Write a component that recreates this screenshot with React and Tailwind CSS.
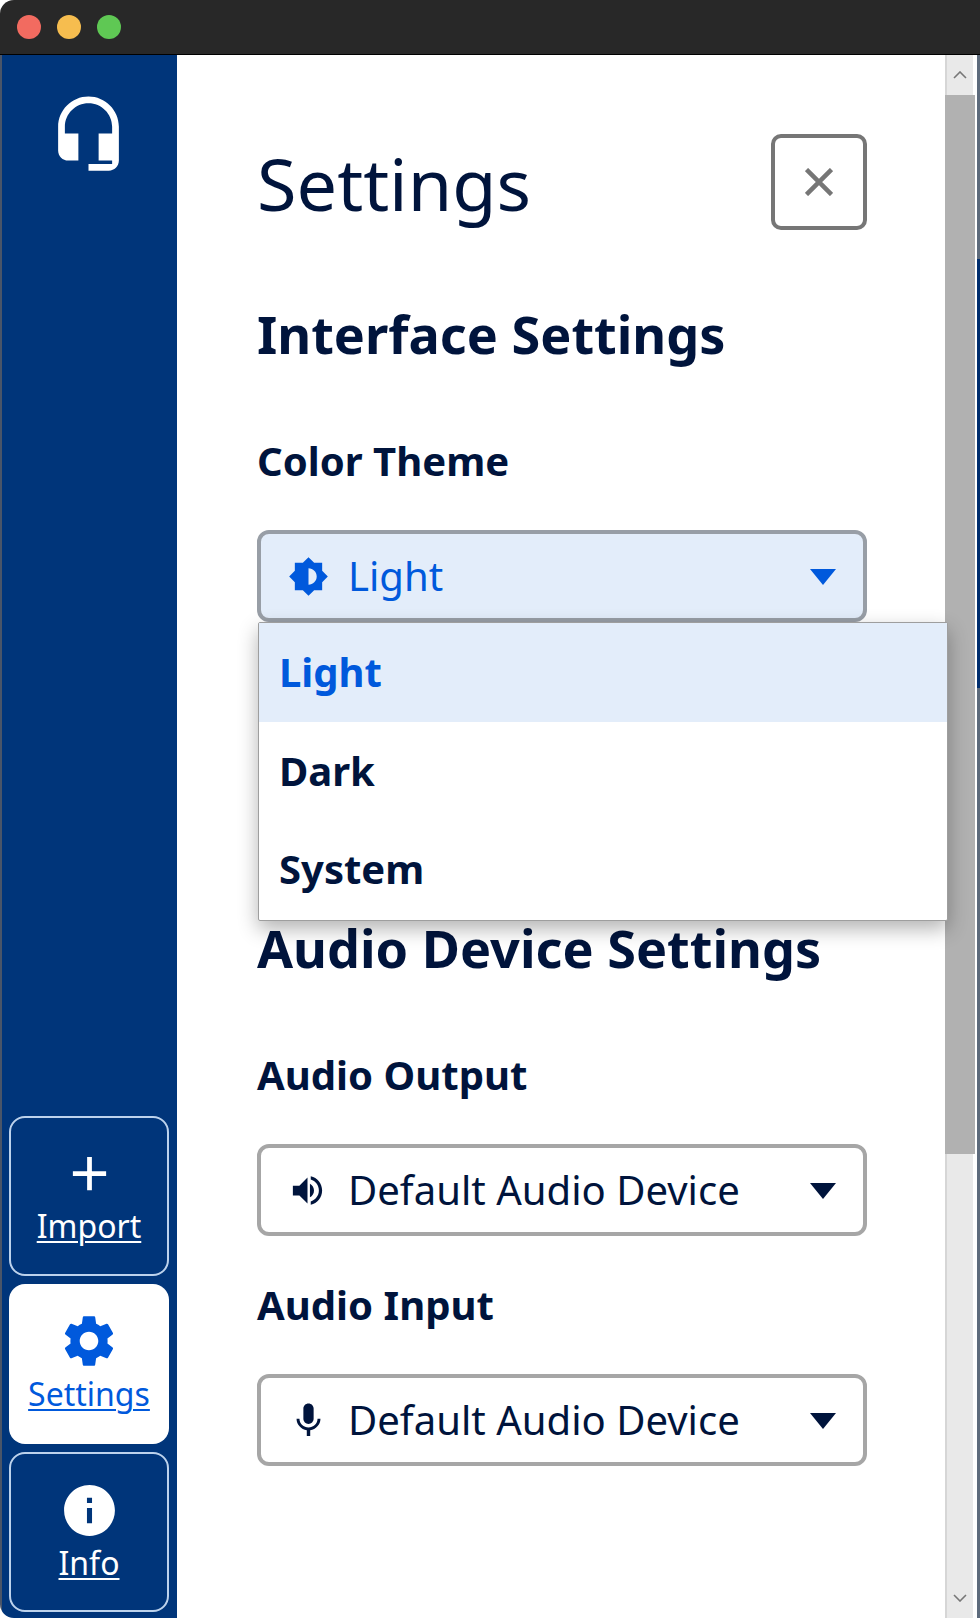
const PATHS = {
  headset: "M12 1c-4.97 0-9 4.03-9 9v7c0 1.66 1.34 3 3 3h3v-8H5v-2c0-3.87 3.13-7 7-7s7 3.13 7 7v2h-4v8h4v1h-7v2h6c1.66 0 3-1.34 3-3V10c0-4.97-4.03-9-9-9z",
  plus: "M19 13h-6v6h-2v-6H5v-2h6V5h2v6h6v2z",
  gear: "M19.14 12.94c.04-.3.06-.61.06-.94 0-.32-.02-.64-.07-.94l2.03-1.58c.18-.14.23-.41.12-.61l-1.92-3.32c-.12-.22-.37-.29-.59-.22l-2.39.96c-.5-.38-1.03-.7-1.62-.94l-.36-2.54c-.04-.24-.24-.41-.48-.41h-3.84c-.24 0-.43.17-.47.41l-.36 2.54c-.59.24-1.13.57-1.62.94l-2.39-.96c-.22-.08-.47 0-.59.22L2.74 8.87c-.12.21-.08.47.12.61l2.03 1.58c-.05.3-.09.63-.09.94s.02.64.07.94l-2.03 1.58c-.18.14-.23.41-.12.61l1.92 3.32c.12.22.37.29.59.22l2.39-.96c.5.38 1.03.7 1.62.94l.36 2.54c.05.24.24.41.48.41h3.84c.24 0 .44-.17.47-.41l.36-2.54c.59-.24 1.13-.56 1.62-.94l2.39.96c.22.08.47 0 .59-.22l1.92-3.32c.12-.22.07-.47-.12-.61l-2.01-1.58zM12 15.6c-1.98 0-3.6-1.62-3.6-3.6s1.62-3.6 3.6-3.6 3.6 1.62 3.6 3.6-1.62 3.6-3.6 3.6z",
  info: "M12 2C6.48 2 2 6.48 2 12s4.48 10 10 10 10-4.48 10-10S17.52 2 12 2zm1 15h-2v-6h2v6zm0-8h-2V7h2v2z",
  theme: "M20 15.31L23.31 12 20 8.69V4h-4.69L12 .69 8.69 4H4v4.69L.69 12 4 15.31V20h4.69L12 23.31 15.31 20H20v-4.69zM12 16.8V7.2c2.65 0 4.8 2.15 4.8 4.8s-2.15 4.8-4.8 4.8z",
  volume: "M3 9v6h4l5 5V4L7 9H3zm10.5-1.2v8.4c1.5-.75 2.5-2.4 2.5-4.2s-1-3.45-2.5-4.2zM14 3.23v2.06c2.89.86 5 3.54 5 6.71s-2.11 5.85-5 6.71v2.06c4.01-.91 7-4.49 7-8.77s-2.99-7.86-7-8.77z",
  mic: "M12 14c1.66 0 3-1.34 3-3V5c0-1.66-1.34-3-3-3S9 3.34 9 5v6c0 1.66 1.34 3 3 3zm5.3-3c0 3-2.54 5.1-5.3 5.1S6.7 14 6.7 11H5c0 3.41 2.72 6.23 6 6.72V21h2v-3.28c3.28-.48 6-3.3 6-6.72h-1.7z",
};

function Icon({ d, className }) {
  return (
    <svg viewBox="0 0 24 24" fill="currentColor" className={className} aria-hidden="true">
      <path d={d} />
    </svg>
  );
}

function NavButton({ icon, label, active, iconClass }) {
  return (
    <div
      className={
        "w-[160px] h-[160px] rounded-[16px] flex flex-col items-center " +
        (active ? "bg-white text-[#0059dc]" : "border-2 border-[#bcd2ec] text-white")
      }
    >
      <Icon d={icon} className={iconClass} />
      <span className="text-[32px] leading-[44px] underline underline-offset-[3px] decoration-[2px]">{label}</span>
    </div>
  );
}

function Select({ icon, label, open, iconClass }) {
  return (
    <div
      className={
        "w-[610px] h-[92px] rounded-[12px] border-[4px] flex items-center pl-[27px] pr-[27px] " +
        (open ? "bg-[#e3edfa] border-[#989ea6] text-[#0059dc]" : "bg-white border-[#a6a6a6] text-[#00143c]")
      }
    >
      <span className="w-[60px] flex items-center justify-start shrink-0">
        <Icon d={icon} className={iconClass} />
      </span>
      <span className="flex-1 text-[40.1px] leading-[56px]">{label}</span>
      <span className="w-0 h-0 mt-[2px] border-x-[13.5px] border-x-transparent border-t-[16px] border-t-current" />
    </div>
  );
}

function Option({ label, selected }) {
  return (
    <div
      className={
        "h-[98.5px] flex items-center pl-[20px] text-[40px] font-bold " +
        (selected ? "bg-[#e3edfa] text-[#0059dc]" : "bg-white text-[#00143c]")
      }
    >
      {label}
    </div>
  );
}

export default function App() {
  return (
    <div
      className="relative w-[980px] h-[1618px] overflow-hidden bg-white flex flex-col rounded-tl-[14px] rounded-bl-[14px]"
      style={{ fontFamily: '"Noto Sans", sans-serif' }}
    >
      {/* Window title bar */}
      <div className="h-[55px] shrink-0 bg-[#282828] border-b border-black flex items-center gap-[16px] pl-[17px] pb-[1px]">
        <span className="w-[24px] h-[24px] rounded-full bg-[#f26b60]" />
        <span className="w-[24px] h-[24px] rounded-full bg-[#f6bd4f]" />
        <span className="w-[24px] h-[24px] rounded-full bg-[#5fc854]" />
      </div>

      <div className="flex-1 min-h-0 flex">
        {/* Window edge */}
        <div className="w-[2px] bg-[#4a5568] shrink-0" />

        {/* Sidebar */}
        <aside className="w-[175px] shrink-0 bg-[#00357a] flex flex-col items-start pl-[7px] pb-[6px] text-white">
          <Icon d={PATHS.headset} className="w-[81px] h-[81px] mt-[38px] ml-[39px] text-white" />
          <div className="mt-auto flex flex-col gap-[8px]">
            <NavButton icon={PATHS.plus} label="Import" iconClass="w-[57px] h-[57px] mt-[27px] mb-[2px]" />
            <NavButton icon={PATHS.gear} label="Settings" active iconClass="w-[62px] h-[62px] mt-[26px]" />
            <NavButton icon={PATHS.info} label="Info" iconClass="w-[61px] h-[61px] mt-[26px]" />
          </div>
        </aside>

        {/* Main panel */}
        <main className="w-[768px] shrink-0 bg-white pl-[80px] pt-[79px] text-[#00143c]">
          <div className="w-[610px] flex items-center justify-between h-[96px]">
            <h1 className="text-[72px] leading-[96px] font-normal translate-y-[1px]">Settings</h1>
            <button className="w-[96px] h-[96px] rounded-[10px] border-[4px] border-[#767676] flex items-center justify-center text-[#767676]">
              <svg viewBox="0 0 28 28" className="w-[28px] h-[28px]" stroke="currentColor" strokeWidth="4.5" fill="none">
                <path d="M1.5 1.5 L26.5 26.5 M26.5 1.5 L1.5 26.5" />
              </svg>
            </button>
          </div>

          <h2 className="mt-[74px] text-[52.2px] leading-[60px] font-bold">Interface Settings</h2>
          <div className="mt-[72px] text-[40.1px] leading-[50px] font-bold">Color Theme</div>

          <div className="relative mt-[44px]">
            <Select icon={PATHS.theme} label="Light" open iconClass="w-[41px] h-[41px]" />
            <div className="absolute left-[1px] top-full w-[690px] h-[299px] bg-white border border-[#9e9e9e] rounded-[2px] shadow-[0_8px_20px_rgba(0,0,0,0.3)] z-10">
              <Option label="Light" selected />
              <Option label="Dark" />
              <Option label="System" />
            </div>
          </div>

          <h2 className="mt-[296px] text-[52.2px] leading-[60px] font-bold">Audio Device Settings</h2>
          <div className="mt-[72px] text-[40.1px] leading-[50px] font-bold">Audio Output</div>
          <div className="mt-[44px]">
            <Select icon={PATHS.volume} label="Default Audio Device" iconClass="w-[39px] h-[39px]" />
          </div>
          <div className="mt-[44px] text-[40.1px] leading-[50px] font-bold">Audio Input</div>
          <div className="mt-[44px]">
            <Select icon={PATHS.mic} label="Default Audio Device" iconClass="w-[41px] h-[41px]" />
          </div>
        </main>

        {/* Scrollbar */}
        <div className="w-[30px] shrink-0 bg-white flex flex-col items-stretch">
          <div className="w-[28px] h-[40px] bg-[#e9e9e9] border-l-2 border-[#d6d6d6] flex items-center justify-center text-[#777777]">
            <svg viewBox="0 0 14 8" className="w-[14px] h-[8px]" fill="none" stroke="currentColor" strokeWidth="1.6">
              <path d="M1 7 L7 1 L13 7" />
            </svg>
          </div>
          <div className="h-[1059px] bg-[#b1b1b1]" />
          <div className="w-[28px] flex-1 bg-[#e9e9e9] border-l-2 border-[#d6d6d6] flex items-end justify-center pb-[16px] text-[#777777]">
            <svg viewBox="0 0 14 8" className="w-[14px] h-[8px]" fill="none" stroke="currentColor" strokeWidth="1.6">
              <path d="M1 1 L7 7 L13 1" />
            </svg>
          </div>
        </div>

        {/* Window edge */}
        <div className="w-[2px] bg-white shrink-0" />
        <div className="w-[3px] shrink-0 flex flex-col bg-[#5d6b7c]">
          <div className="h-[204px]" />
          <div className="h-[429px] bg-[#002e6e]" />
        </div>
      </div>
    </div>
  );
}
